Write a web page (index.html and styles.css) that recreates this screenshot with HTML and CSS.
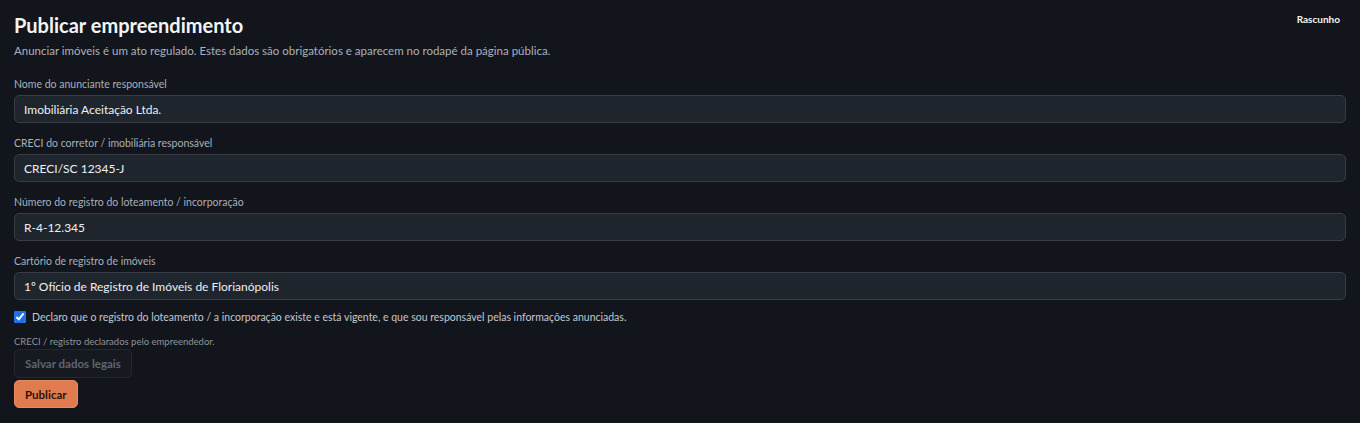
FILE: index.html
```html
<!DOCTYPE html>
<html lang="pt-BR">
<head>
<meta charset="utf-8">
<link rel="stylesheet" href="styles.css">
</head>
<body>
<main class="page">
  <div class="header">
    <h1 class="title">Publicar empreendimento</h1>
    <span class="status">Rascunho</span>
  </div>
  <p class="intro">Anunciar imóveis é um ato regulado. Estes dados são obrigatórios e aparecem no rodapé da página pública.</p>
  <form class="form">
    <label class="field">
      <span class="label">Nome do anunciante responsável</span>
      <input class="input" type="text" value="Imobiliária Aceitação Ltda.">
    </label>
    <label class="field">
      <span class="label">CRECI do corretor / imobiliária responsável</span>
      <input class="input" type="text" value="CRECI/SC 12345-J">
    </label>
    <label class="field">
      <span class="label">Número do registro do loteamento / incorporação</span>
      <input class="input" type="text" value="R-4-12.345">
    </label>
    <label class="field">
      <span class="label">Cartório de registro de imóveis</span>
      <input class="input" type="text" value="1º Ofício de Registro de Imóveis de Florianópolis">
    </label>
    <label class="check">
      <input type="checkbox" checked>
      <span>Declaro que o registro do loteamento / a incorporação existe e está vigente, e que sou responsável pelas informações anunciadas.</span>
    </label>
    <p class="note">CRECI / registro declarados pelo empreendedor.</p>
    <div class="actions">
      <button type="button" class="btn btn-disabled" disabled>Salvar dados legais</button>
      <button type="button" class="btn btn-primary">Publicar</button>
    </div>
  </form>
</main>
</body>
</html>
```
FILE: styles.css
```css
* { box-sizing: border-box; }
html, body { margin: 0; background: #12151b; }
body {
  font-family: Lato, "Open Sans", sans-serif;
  color: #e6e8eb;
}
.page { padding: 12px 14px 14px 14px; }
.header {
  display: flex;
  justify-content: space-between;
  align-items: flex-start;
}
.title {
  margin: 0;
  font-size: 20px;
  font-weight: 700;
  line-height: 26px;
  color: #f3f4f6;
}
.status {
  font-size: 10px;
  font-weight: 700;
  color: #f3f4f6;
  margin-top: 1px;
  margin-right: 6px;
}
.intro {
  margin: 4px 0 0 0;
  font-size: 11.5px;
  line-height: 18px;
  color: #aab1bb;
}
.form { margin-top: 17px; display: flex; flex-direction: column; }
.field { display: flex; flex-direction: column; margin-bottom: 13px; }
.label {
  font-size: 10.5px;
  line-height: 14px;
  color: #a9b0ba;
  margin-bottom: 4px;
}
.input {
  height: 28px;
  width: 100%;
  padding: 0 9px;
  background: #1f252d;
  border: 1px solid #363d47;
  border-radius: 5px;
  color: #eef0f3;
  font-family: inherit;
  font-size: 12px;
  outline: none;
}
.check {
  display: flex;
  align-items: center;
  gap: 6px;
  margin-top: -2px;
  font-size: 10.5px;
  color: #c3c8cf;
}
.check input {
  margin: 0;
  width: 12px;
  height: 12px;
  accent-color: #1f6feb;
}
.note {
  margin: 13px 0 2px 0;
  font-size: 9.5px;
  color: #8d949e;
}
.actions { display: flex; flex-direction: column; align-items: flex-start; gap: 2px; }
.btn {
  font-family: inherit;
  font-size: 11.5px;
  font-weight: 700;
  border-radius: 5px;
  padding: 0 10px;
  height: 29px;
}
.btn-disabled {
  background: #161a20;
  border: 1px solid #232830;
  color: #5e6570;
}
.btn-primary {
  background: #e07b50;
  border: 1px solid #e58a62;
  color: #2a1208;
  height: 28px;
}
```
